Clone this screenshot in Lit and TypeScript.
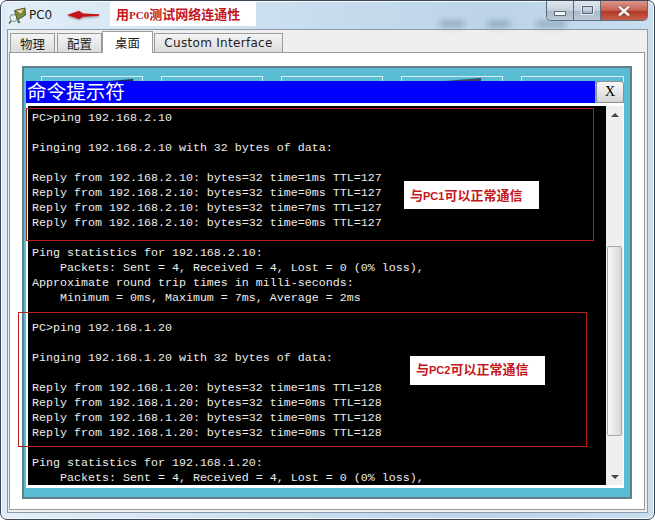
import { LitElement, html, css, svg } from "lit";
import { customElement } from "lit/decorators.js";

const LINES = [
  "PC>ping 192.168.2.10", "", "Pinging 192.168.2.10 with 32 bytes of data:", "",
  "Reply from 192.168.2.10: bytes=32 time=1ms TTL=127",
  "Reply from 192.168.2.10: bytes=32 time=0ms TTL=127",
  "Reply from 192.168.2.10: bytes=32 time=7ms TTL=127",
  "Reply from 192.168.2.10: bytes=32 time=0ms TTL=127", "",
  "Ping statistics for 192.168.2.10:",
  "    Packets: Sent = 4, Received = 4, Lost = 0 (0% loss),",
  "Approximate round trip times in milli-seconds:",
  "    Minimum = 0ms, Maximum = 7ms, Average = 2ms", "",
  "PC>ping 192.168.1.20", "", "Pinging 192.168.1.20 with 32 bytes of data:", "",
  "Reply from 192.168.1.20: bytes=32 time=1ms TTL=128",
  "Reply from 192.168.1.20: bytes=32 time=0ms TTL=128",
  "Reply from 192.168.1.20: bytes=32 time=0ms TTL=128",
  "Reply from 192.168.1.20: bytes=32 time=0ms TTL=128", "",
  "Ping statistics for 192.168.1.20:",
  "    Packets: Sent = 4, Received = 4, Lost = 0 (0% loss),",
];

const ICON = svg`<svg class="pcicon" width="19" height="20" viewBox="0 0 19 20">
  <circle cx="5.5" cy="13" r="3.4" fill="#eef3f0" stroke="#8aa39a" stroke-width="1.1"/>
  <path d="M3.2 15.8L1 18.5" stroke="#5b5b5b" stroke-width="1.5"/>
  <path d="M6.5 5.5L17 3L17.5 10L9.5 15Z" fill="#7c8f35" stroke="#39451f" stroke-width=".8"/>
  <path d="M7 5.6L13 9.5L17 3.2Z" fill="#e0cf92" stroke="#4d5a2a" stroke-width=".7"/>
  <path d="M10 15.5L11.5 18" stroke="#2f6b36" stroke-width="2"/>
</svg>`;

const ARROW = svg`<svg class="arrowsvg" width="34" height="12" viewBox="0 0 34 12">
  <path d="M1 6L13 1.8L17 4.4L33 5.2L33 6.8L17 7.8L13 10Z" fill="#c41616"/>
</svg>`;

const CLOSE = svg`<svg width="14" height="12" viewBox="0 0 14 12">
  <path d="M2 1.5L12 10.5M12 1.5L2 10.5" stroke="#8f3a30" stroke-width="4"/>
  <path d="M2 1.5L12 10.5M12 1.5L2 10.5" stroke="#f3efee" stroke-width="2.6"/>
</svg>`;

@customElement("app-root")
export class AppRoot extends LitElement {
  static styles = css`
    :host { display: block; width: 655px; height: 520px; position: relative; overflow: hidden; background: #fff; font-family: "DejaVu Sans", sans-serif; }
    .window { box-sizing: border-box; width: 655px; height: 520px; border: 1px solid #3c4654; border-radius: 7px; padding: 0 6px 6px 6px; display: flex; flex-direction: column;
      background: linear-gradient(90deg, #d6e7f5 0, #e2eef8 8px, #c9deef 45%, #bcd3e8 75%, #c9deef 100%); box-shadow: inset 0 0 0 1px #f4fafe; }
    .title { height: 28px; flex: none; display: flex; align-items: flex-start; position: relative; }
    .app { display: flex; align-items: center; gap: 2px; height: 28px; margin-left: 1px; font-size: 12px; color: #1a1a1a; }
    .pcicon { flex: none; }
    .arrow { margin-left: 14px; height: 28px; display: flex; align-items: center; }
    .arrowsvg { filter: drop-shadow(0 1px 1px rgba(90, 20, 20, .5)); }
    .spacer { flex: 1; }
    .smudge { position: absolute; top: 20px; height: 6px; background: #7f96aa; filter: blur(3px); opacity: .75; }
    .s1 { left: 433px; width: 24px; }
    .s2 { left: 481px; width: 22px; }
    .s3 { left: 529px; width: 30px; }
    .ctrls { display: flex; height: 20px; width: 102px; border: 1px solid #5d6b7c; border-top: 0; border-radius: 0 0 5px 5px; overflow: hidden; box-sizing: border-box; position: relative; }
    .ctrl { display: flex; align-items: center; justify-content: center; height: 100%; box-sizing: border-box; background: linear-gradient(#dfe7ef, #c5d0dc 50%, #a9b7c6 51%, #bccad7); border-right: 1px solid #5d6b7c; }
    .ctrl.min, .ctrl.max { width: 27px; }
    .ctrl.close { flex: 1; border-right: 0; background: linear-gradient(#d9978c, #c8604f 50%, #b13a26 55%, #c9604a); }
    .glyph-min { width: 10px; height: 3px; background: #f4f6f8; border: 1px solid #5c6b7a; margin-top: 5px; }
    .glyph-max { width: 9px; height: 6px; border: 1px solid #56626f; outline: 1px solid #e8eef4; margin-top: -1px; }
    .frame { flex: 1; display: flex; flex-direction: column; border: 1px solid #8c99a8; background: #efefef; padding: 3px 2px 2px 1px; min-height: 0; }
    .tabs { display: flex; align-items: flex-end; height: 19px; padding-left: 1px; flex: none; position: relative; z-index: 1; }
    .tab { box-sizing: border-box; height: 19px; border: 1px solid #9a9a9a; border-bottom: 0; background: linear-gradient(#f4f4f4, #dcdcdc); font-size: 12.5px; color: #1c1c1c; display: flex; align-items: center; justify-content: center; margin-right: 2px; font-family: "Noto Sans CJK SC", sans-serif; }
    .tab.one { width: 45px; }
    .tab.two { width: 45px; margin-right: 0; }
    .tab.active { width: 51px; height: 22px; background: #fff; margin-right: 1px; margin-bottom: -1px; padding-bottom: 1px; }
    .tab.custom { width: 129px; font-family: "DejaVu Sans", sans-serif; font-size: 12px; letter-spacing: .3px; margin-right: 0; }
    .panel { flex: 1; border: 1px solid #9a9a9a; background: #fff; padding: 13px 12px 10px 12px; min-height: 0; display: flex; }
    .desktop { flex: 1; border: 2px solid #62808a; background: #5abcd3; position: relative; padding: 13px 6px 9px 2px; display: flex; flex-direction: column; box-sizing: border-box; }
    .icons { position: absolute; left: 17px; top: 8px; display: flex; gap: 18px; }
    .ic { width: 102px; height: 10px; border: 1px solid #d8f0f5; box-sizing: border-box; position: relative; }
    .ic.last { width: 103px; }
    .wedge { position: absolute; top: 2px; height: 4px; background: #1d2b44; clip-path: polygon(0 100%, 100% 0, 100% 100%); }
    .w1 { left: 44px; width: 47px; }
    .w2 { left: 19px; width: 60px; background: #3b4a63; top: 1px; height: 5px; }
    .cmd { position: relative; flex: 1; display: flex; flex-direction: column; min-height: 0; }
    .bar { display: flex; height: 22px; flex: none; }
    .bar-title { flex: 1; display: flex; align-items: center; background: #0000ff; color: #fff; font: 400 19.6px/19px "Noto Sans CJK SC", sans-serif; padding: 0 0 3px 1px; box-sizing: border-box; }
    .xbtn { width: 28px; box-sizing: border-box; margin-left: 1px; border: 1px solid #8a8f93; border-radius: 3px; background: linear-gradient(#f8f8f8, #d5d5d5); font: 14px/20px "Liberation Serif", serif; color: #000; text-align: center; }
    .body { flex: 1; display: flex; background: #fff; padding: 3px 1px 3px 2px; min-height: 0; }
    .term { flex: 1; background: #000; color: #ececec; font: 11.67px/15px "Liberation Mono", monospace; padding: 5px 0 0 4px; overflow: hidden; }
    .line { height: 15px; white-space: pre; }
    .scroll { width: 17px; flex: none; background: #efefef; position: relative; display: flex; flex-direction: column; align-items: center; justify-content: space-between; padding: 7px 0 6px; box-sizing: border-box; }
    .up { width: 0; height: 0; border: 4px solid transparent; border-top: 0; border-bottom: 4px solid #444; }
    .down { width: 0; height: 0; border: 4px solid transparent; border-bottom: 0; border-top: 4px solid #444; }
    .thumb { position: absolute; left: 1px; right: 1px; top: 140px; height: 190px; box-sizing: border-box; border: 1px solid #a9a9a9; border-radius: 2px; background: linear-gradient(90deg, #fafafa, #d6d6d6); }
    .rect { position: absolute; border: 1px solid #b5201c; box-sizing: border-box; pointer-events: none; }
    .r1 { left: 26px; top: 108px; width: 568px; height: 133px; }
    .r2 { left: 18px; top: 312px; width: 569px; height: 135px; }
    .note { position: absolute; background: #fff; color: #c4161c; font: 700 13px/1 "Noto Sans CJK SC", sans-serif; display: flex; align-items: center; white-space: nowrap; box-sizing: border-box; padding-left: 6px; }
    .n0 { left: 110px; top: 2px; width: 146px; height: 24px; }
    .n1 { left: 404px; top: 181px; width: 135px; height: 28px; }
    .n2 { left: 410px; top: 356px; width: 135px; height: 29px; padding-bottom: 4px; }
    .lat { font: 700 11px/1 "Liberation Sans", sans-serif; }
    .lat.serif { font-family: "Liberation Serif", serif; }
  `;

  render() {
    return html`
      <div class="window">
        <div class="title">
          <div class="app">${ICON}<span>PC0</span></div>
          <div class="arrow">${ARROW}</div>
          <div class="spacer"></div>
          <div class="smudge s1"></div>
          <div class="smudge s2"></div>
          <div class="smudge s3"></div>
          <div class="ctrls">
            <div class="ctrl min"><div class="glyph-min"></div></div>
            <div class="ctrl max"><div class="glyph-max"></div></div>
            <div class="ctrl close">${CLOSE}</div>
          </div>
        </div>
        <div class="frame">
          <div class="tabs">
            <div class="tab one">物理</div>
            <div class="tab two">配置</div>
            <div class="tab active">桌面</div>
            <div class="tab custom">Custom Interface</div>
          </div>
          <div class="panel">
            <div class="desktop">
              <div class="icons">
                <div class="ic"><div class="wedge w1"></div></div>
                <div class="ic"></div>
                <div class="ic"></div>
                <div class="ic"><div class="wedge w2"></div></div>
                <div class="ic last"></div>
              </div>
              <div class="cmd">
                <div class="bar"><div class="bar-title">命令提示符</div><div class="xbtn">X</div></div>
                <div class="body">
                  <div class="term">${LINES.map((l) => html`<div class="line">${l}</div>`)}</div>
                  <div class="scroll"><div class="up"></div><div class="thumb"></div><div class="down"></div></div>
                </div>
              </div>
            </div>
          </div>
        </div>
      </div>
      <div class="note n0"><span>用<span class="lat serif">PC0</span>测试网络连通性</span></div>
      <div class="rect r1"></div>
      <div class="rect r2"></div>
      <div class="note n1"><span>与<span class="lat">PC1</span>可以正常通信</span></div>
      <div class="note n2"><span>与<span class="lat">PC2</span>可以正常通信</span></div>
    `;
  }
}
